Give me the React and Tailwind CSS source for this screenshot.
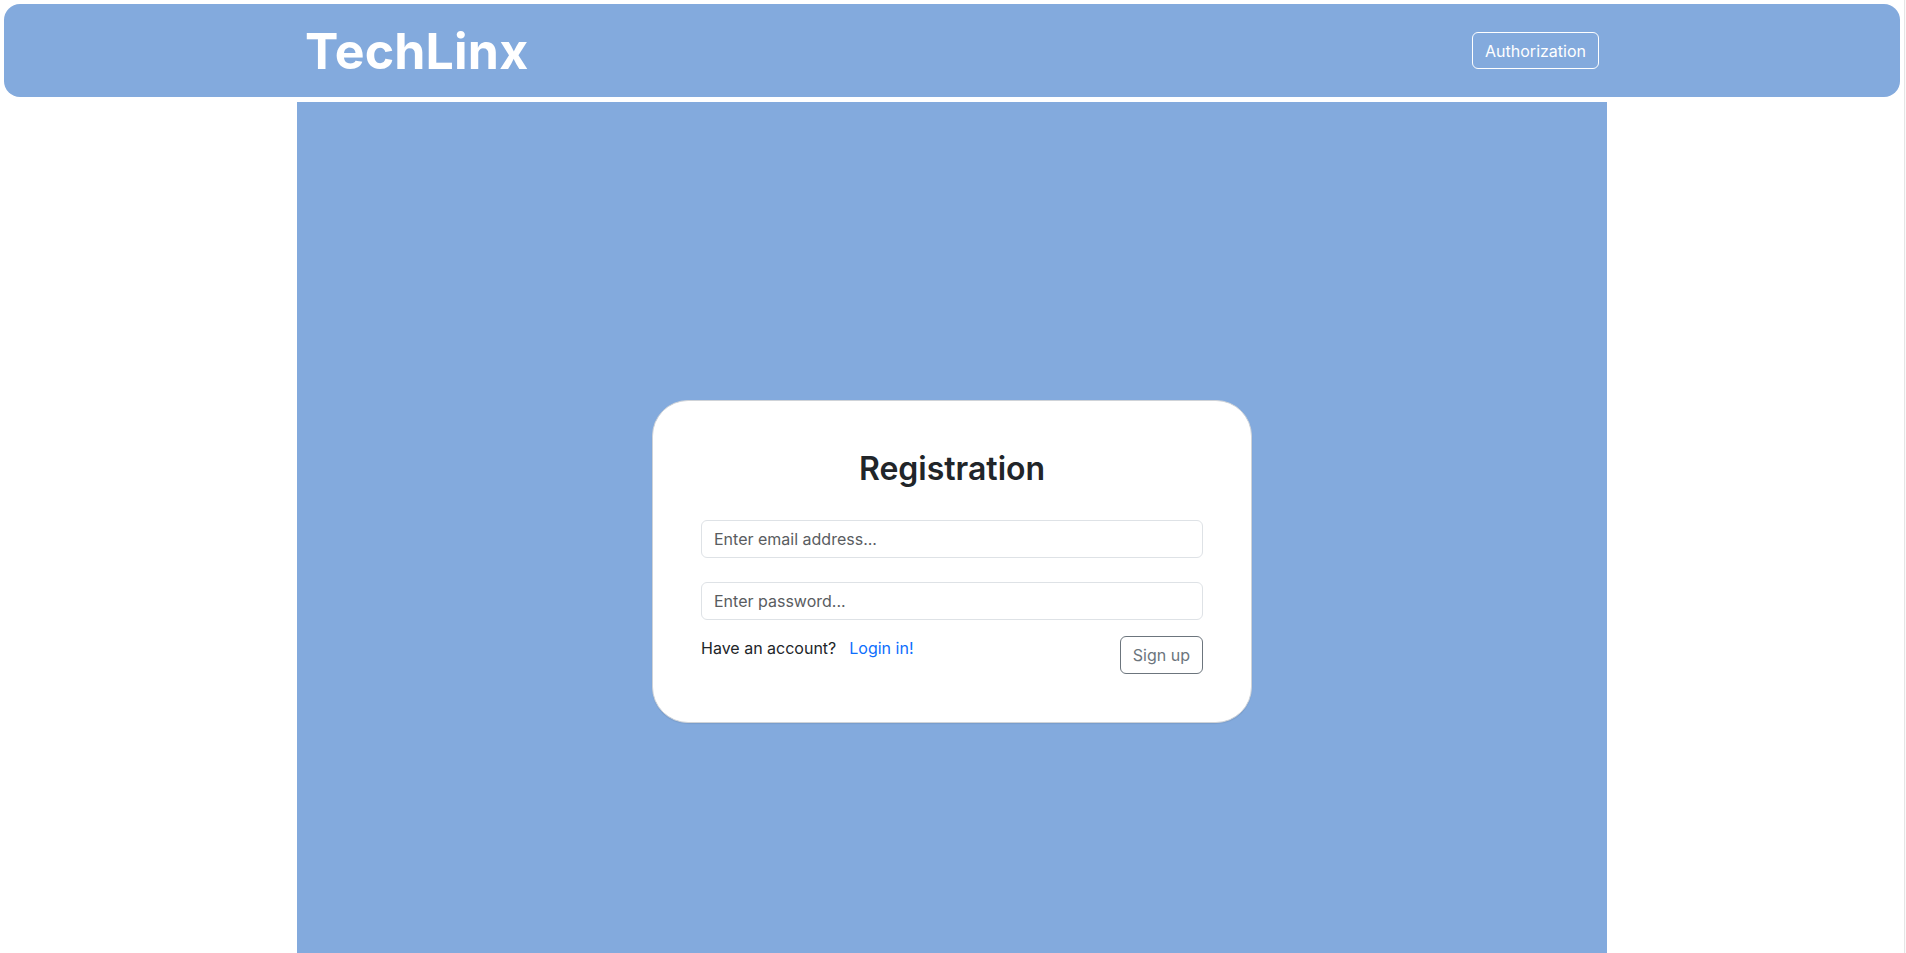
const Header = () => {
  return (
    <header className="mt-1 ml-1 mr-1 h-[93px] rounded-2xl bg-[#83aadd]">
      <div className="mx-auto flex h-full w-[1310px] items-center justify-between px-2">
        <h1 className="text-[50px] font-bold leading-none tracking-[0.2px] text-white">
          TechLinx
        </h1>
        <button className="h-[37px] rounded-md border border-white px-3 text-[16px] text-white">
          Authorization
        </button>
      </div>
    </header>
  );
};

const RegistrationCard = () => {
  return (
    <div className="w-[600px] rounded-[36px] border border-[#cfd3d8] bg-white px-12 pt-[49px] pb-[48px] shadow-[0_1px_1px_rgba(0,0,0,0.08)]">
      <h2 className="text-center text-[32px] font-semibold leading-[38px] text-[#212529]">
        Registration
      </h2>

      <input
        type="email"
        placeholder="Enter email address..."
        className="mt-[32px] block h-[38px] w-full rounded-md border border-[#dee2e6] px-3 text-[16px] text-[#212529] placeholder:text-[#595c5f] outline-none"
      />
      <input
        type="password"
        placeholder="Enter password..."
        className="mt-6 block h-[38px] w-full rounded-md border border-[#dee2e6] px-3 text-[16px] text-[#212529] placeholder:text-[#595c5f] outline-none"
      />

      <div className="mt-4 flex items-start justify-between">
        <div className="text-[16px] leading-6 text-[#212529]">
          Have an account?
          <a href="#" className="ml-[13px] text-[#0d6efd]">
            Login in!
          </a>
        </div>
        <button className="h-[38px] rounded-md border border-[#6c757d] px-3 text-[16px] text-[#6c757d]">
          Sign up
        </button>
      </div>
    </div>
  );
};

export default function App() {
  return (
    <div
      className="flex min-h-screen w-full bg-white"
      style={{ fontFamily: 'Inter, "Noto Sans", sans-serif' }}
    >
      <div className="w-[1904px] shrink-0">
        <Header />
        <main className="mx-auto mt-[5px] flex min-h-[851px] w-[1310px] justify-center bg-[#83aadd] pt-[298px]">
          <div>
            <RegistrationCard />
          </div>
        </main>
      </div>
      <div className="w-[2px] shrink-0 border-l border-[#e5e5e5] bg-[#fafafa]" />
    </div>
  );
}
